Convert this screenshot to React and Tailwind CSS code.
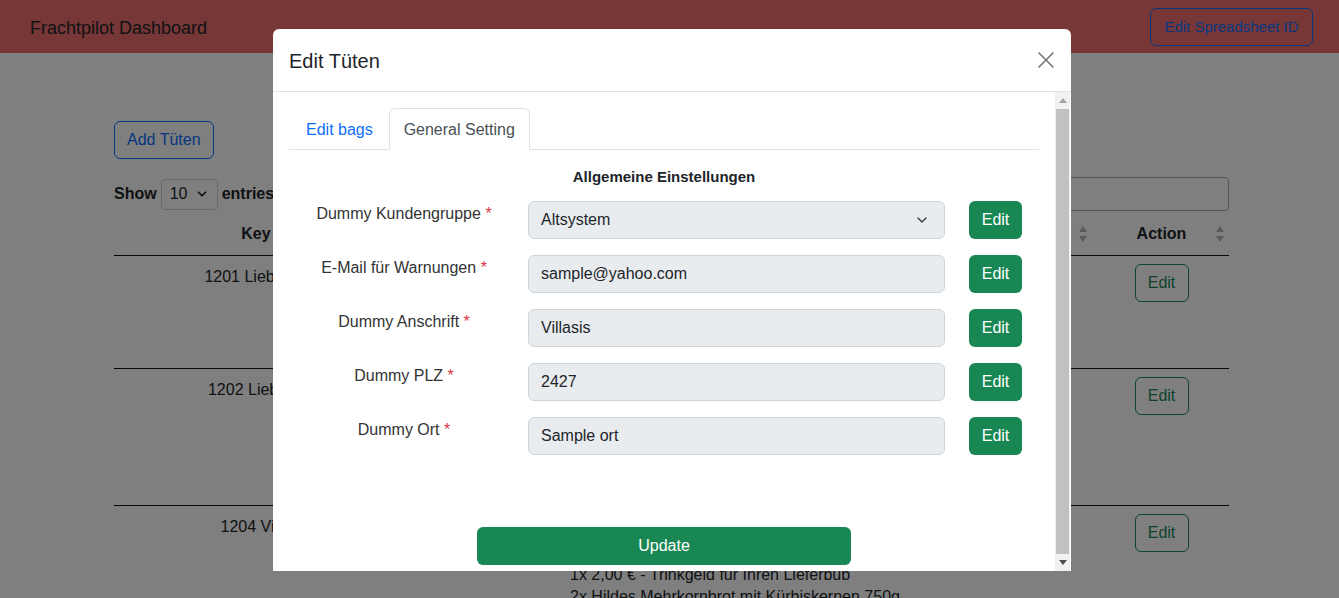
import { ChevronDown } from "lucide-react";

const felder = [
  { label: "Dummy Kundengruppe", wert: "Altsystem", select: true },
  { label: "E-Mail für Warnungen", wert: "sample@yahoo.com" },
  { label: "Dummy Anschrift", wert: "Villasis" },
  { label: "Dummy PLZ", wert: "2427" },
  { label: "Dummy Ort", wert: "Sample ort" },
];

function SortIcon() {
  return (
    <svg width="10" height="18" viewBox="0 0 10 18" className="text-[#b4b4b4]">
      <path d="M5 1 L9 7 L1 7 Z" fill="currentColor" />
      <path d="M5 17 L9 11 L1 11 Z" fill="currentColor" />
    </svg>
  );
}

function EditOutline() {
  return (
    <div className="flex w-[135px] justify-center pt-[8px]">
      <button className="h-[38px] w-[54px] rounded-[6px] border border-[#198754] text-[16px] text-[#198754]">Edit</button>
    </div>
  );
}

function Zeile({ nummer, hoehe }) {
  return (
    <div className={`flex border-b border-[#111] ${hoehe}`}>
      <div className="w-[284px] pt-[9px] text-center text-[16px] leading-6 text-[#212529]">{nummer}</div>
      <div className="flex-1" />
      <EditOutline />
    </div>
  );
}

export default function App() {
  return (
    <div className="relative h-[598px] w-[1339px] overflow-hidden bg-white font-['Liberation_Sans',Arial,sans-serif] text-[#212529]">
      <nav className="flex h-[53px] items-center justify-between bg-[#ee6e6e] pl-[30px] pr-[26px]">
        <span className="mt-[3px] text-[18px] text-[#212529]">Frachtpilot Dashboard</span>
        <button className="h-[38px] w-[163px] rounded-[6px] border border-[#0d6efd] pt-[2px] text-[15px] text-[#0d6efd]">
          Edit Spreadsheet ID
        </button>
      </nav>

      <main className="ml-[114px] w-[1115px] pt-[68px]">
        <button className="h-[38px] rounded-[6px] border border-[#0d6efd] px-[12px] text-[16px] text-[#0d6efd]">
          Add Tüten
        </button>

        <div className="mt-[18px] flex items-center justify-between">
          <div className="flex items-center gap-[4px] text-[16px] font-bold">
            <span>Show</span>
            <div className="flex h-[31px] w-[57px] items-center justify-between rounded-[4px] border border-[#ced4da] px-[8px] font-normal">
              <span>10</span>
              <ChevronDown size={14} strokeWidth={3} />
            </div>
            <span>entries</span>
          </div>
          <div className="flex items-center gap-[8px] text-[16px]">
            <span>Search:</span>
            <div className="h-[34px] w-[200px] rounded-[4px] border border-[#aaa]" />
          </div>
        </div>

        <div className="mt-[8px] flex h-[37px] items-start border-b border-[#111] pt-[3px] text-[16px] font-bold leading-6">
          <div className="w-[284px] text-center">Key</div>
          <div className="flex flex-1 justify-end pr-[6px] pt-[3px]">
            <SortIcon />
          </div>
          <div className="relative flex w-[135px] justify-center">
            <span>Action</span>
            <span className="absolute right-[4px] top-[3px]">
              <SortIcon />
            </span>
          </div>
        </div>

        <Zeile nummer="1201 Lieblings" hoehe="h-[113px]" />
        <Zeile nummer="1202 Liebens" hoehe="h-[137px]" />
        <div className="flex h-[120px]">
          <div className="w-[284px] pt-[9px] text-center text-[16px] leading-6">1204 Vital</div>
          <div className="flex-1 pl-[172px] pt-[58px] text-[16px] leading-[22px]">
            <p>1x 2,00 € - Trinkgeld für Ihren Lieferbub</p>
            <p>2x Hildes Mehrkornbrot mit Kürbiskernen 750g</p>
          </div>
          <EditOutline />
        </div>
      </main>

      <div className="absolute inset-0 bg-black/50" />

      <div className="absolute left-[273px] top-[29px] flex h-[542px] w-[798px] flex-col rounded-t-[6px] bg-white">
        <div className="flex h-[63px] shrink-0 items-center justify-between border-b border-[#dee2e6] px-[16px]">
          <h5 className="pt-[2px] text-[20px] font-medium leading-[30px] text-[#212529]">Edit Tüten</h5>
          <svg width="18" height="18" viewBox="0 0 18 18">
            <path d="M1.5 1.5 L16.5 16.5 M16.5 1.5 L1.5 16.5" stroke="#777" strokeWidth="1.6" />
          </svg>
        </div>

        <div className="flex min-h-0 flex-1 pr-[1px]">
          <div className="flex-1 overflow-hidden p-[16px]">
            <ul className="flex border-b border-[#dee2e6] text-[16px]">
              <li className="pb-[7px] pl-[17px] pr-[16px] pt-[10px] leading-6 text-[#0d6efd]">Edit bags</li>
              <li className="-mb-px w-[141px] rounded-t-[6px] border border-[#dee2e6] border-b-white bg-white pb-[7px] pt-[9px] text-center leading-6 text-[#495057]">
                General Setting
              </li>
            </ul>

            <h6 className="mt-[15px] text-center text-[15px] font-bold leading-6 text-[#212529]">Allgemeine Einstellungen</h6>

            <div className="mt-[12px] flex flex-col gap-[16px]">
              {felder.map((feld) => (
                <div key={feld.label} className="flex items-start">
                  <label className="w-[230px] pt-[1px] text-center text-[16px] leading-6 text-[#333]">
                    {feld.label} <span className="text-[#dc3545]">*</span>
                  </label>
                  <div className="ml-[9px] flex h-[38px] w-[417px] items-center justify-between rounded-[6px] border border-[#ced4da] bg-[#e9ecef] pl-[12px] pr-[14px] text-[16px] text-[#212529]">
                    <span>{feld.wert}</span>
                    {feld.select && <ChevronDown size={16} strokeWidth={2} className="text-[#343a40]" />}
                  </div>
                  <button className="ml-[24px] h-[38px] w-[53px] rounded-[6px] bg-[#198754] text-[16px] text-white">Edit</button>
                </div>
              ))}
            </div>

            <div className="mt-[72px] flex justify-center">
              <button className="h-[38px] w-[374px] rounded-[6px] bg-[#198754] text-[16px] text-white">Update</button>
            </div>
          </div>

          <div className="flex w-[15px] flex-col bg-[#f1f1f1]">
            <div className="flex h-[17px] items-center justify-center">
              <svg width="8" height="5" viewBox="0 0 8 5">
                <path d="M4 0 L8 5 L0 5 Z" fill="#a3a3a3" />
              </svg>
            </div>
            <div className="mx-[1px] flex-1 bg-[#c1c1c1]" />
            <div className="flex h-[17px] items-center justify-center">
              <svg width="8" height="5" viewBox="0 0 8 5">
                <path d="M0 0 L8 0 L4 5 Z" fill="#505050" />
              </svg>
            </div>
          </div>
        </div>
      </div>
    </div>
  );
}
